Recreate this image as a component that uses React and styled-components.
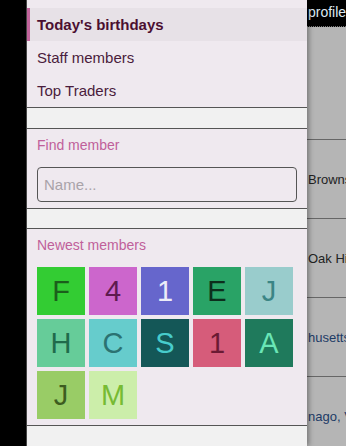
import React from 'react'
import styled, { createGlobalStyle } from 'styled-components'

const GlobalStyle = createGlobalStyle`
    html, body {
        margin: 0;
        padding: 0;
        height: 100%;
        overflow: hidden;
        font-family: "Liberation Sans", Arial, sans-serif;
    }
`;

const navItems = [
    { label: "Today's birthdays", active: true },
    { label: 'Staff members' },
    { label: 'Top Traders' },
];

const members = [
    { ch: 'F', bg: '#33cc33', fg: '#1b5e1b' },
    { ch: '4', bg: '#cc66cc', fg: '#5e1a4e' },
    { ch: '1', bg: '#6666cc', fg: '#ececf8' },
    { ch: 'E', bg: '#29a366', fg: '#0c2e1c' },
    { ch: 'J', bg: '#99cccc', fg: '#3b8585' },
    { ch: 'H', bg: '#66cc99', fg: '#1f6b4b' },
    { ch: 'C', bg: '#66cccc', fg: '#2b7272' },
    { ch: 'S', bg: '#145757', fg: '#47cccc' },
    { ch: '1', bg: '#d65c7a', fg: '#6b1a33' },
    { ch: 'A', bg: '#1f7a5c', fg: '#6ae6b6' },
    { ch: 'J', bg: '#99cc66', fg: '#3d5c1f' },
    { ch: 'M', bg: '#cceeaa', fg: '#77bb33' },
];

const rows = ['Browns', 'Oak Hi', 'husetts', 'nago, V'];

function App() {
    return (
        <Page>
            <GlobalStyle />
            <Rail />
            <Drawer>
                <Nav>
                    {navItems.map((item) => (
                        <NavItem key={item.label} $active={item.active}>{item.label}</NavItem>
                    ))}
                </Nav>
                <Spacer />
                <Section>
                    <SectionTitle>Find member</SectionTitle>
                    <SearchInput placeholder="Name..." />
                </Section>
                <Spacer />
                <Section>
                    <SectionTitle>Newest members</SectionTitle>
                    <Tiles>
                        {members.map((m, i) => (
                            <Tile key={i} $bg={m.bg} $fg={m.fg}>{m.ch}</Tile>
                        ))}
                    </Tiles>
                </Section>
                <Spacer $grow />
            </Drawer>
            <Behind>
                <TopBar>profile</TopBar>
                <TableHead />
                {rows.map((r, i) => (
                    <Row key={r} $blue={i >= 2}>{r}</Row>
                ))}
            </Behind>
        </Page>
    )
}

export default App;

const Page = styled.div`
    display: flex;
    width: 346px;
    height: 446px;
    overflow: hidden;
    background: #b5b5b5;
`;
const Rail = styled.div`
    width: 26px;
    flex-shrink: 0;
    background: #000;
    border-right: 1px solid #4a4a4a;
`;
const Drawer = styled.div`
    width: 280px;
    flex-shrink: 0;
    display: flex;
    flex-direction: column;
    background: #f1f1f1;
    box-shadow: 2px 0 5px rgba(0,0,0,0.35);
    position: relative;
    z-index: 2;
`;
const Nav = styled.div`
    display: flex;
    flex-direction: column;
    padding-top: 8px;
    background: #efe9ef;
    border-bottom: 1px solid #555;
`;
const NavItem = styled.div`
    height: 33px;
    display: flex;
    align-items: center;
    padding-left: ${p => p.$active ? '7px' : '10px'};
    border-left: ${p => p.$active ? '3px solid #c2649c' : 'none'};
    background: ${p => p.$active ? '#e7e1e7' : 'transparent'};
    font-size: 15px;
    font-weight: ${p => p.$active ? 'bold' : 'normal'};
    color: ${p => p.$active ? '#4b0f31' : '#4a1c3c'};
`;
const Spacer = styled.div`
    height: 20px;
    flex-grow: ${p => p.$grow ? 1 : 0};
    background: #f1f1f1;
`;
const Section = styled.div`
    display: flex;
    flex-direction: column;
    padding: 8px 10px 6px;
    background: #efe9ef;
    border-top: 1px solid #555;
    border-bottom: 1px solid #555;
`;
const SectionTitle = styled.div`
    font-size: 14px;
    line-height: 17px;
    color: #c0609a;
    margin-bottom: 13px;
`;
const SearchInput = styled.input`
    box-sizing: border-box;
    width: 260px;
    height: 35px;
    padding: 0 6px;
    border: 1px solid #555;
    border-radius: 4px;
    background: #efe9ef;
    font-family: "Liberation Sans", Arial, sans-serif;
    font-size: 15px;
    color: #333;
    outline: none;
    &::placeholder {
        color: #a9a3a9;
    }
`;
const Tiles = styled.div`
    display: grid;
    grid-template-columns: repeat(5, 48px);
    grid-auto-rows: 48px;
    gap: 4px;
`;
const Tile = styled.div`
    display: flex;
    align-items: center;
    justify-content: center;
    background: ${p => p.$bg};
    color: ${p => p.$fg};
    font-size: 29px;
`;
const Behind = styled.div`
    flex: 1;
    display: flex;
    flex-direction: column;
    min-width: 0;
    white-space: nowrap;
    overflow: hidden;
`;
const TopBar = styled.div`
    height: 26px;
    flex-shrink: 0;
    background: #000;
    border-bottom: 1px dotted #777;
    color: #dde9f2;
    font-size: 14px;
    line-height: 24px;
    padding-left: 1px;
`;
const TableHead = styled.div`
    height: 112px;
    flex-shrink: 0;
    border-bottom: 1px solid #666;
`;
const Row = styled.div`
    height: 78px;
    flex-shrink: 0;
    display: flex;
    align-items: center;
    padding-left: 1px;
    border-bottom: 1px solid #666;
    font-size: 13px;
    color: ${p => p.$blue ? '#1d3b66' : '#222'};
`;
